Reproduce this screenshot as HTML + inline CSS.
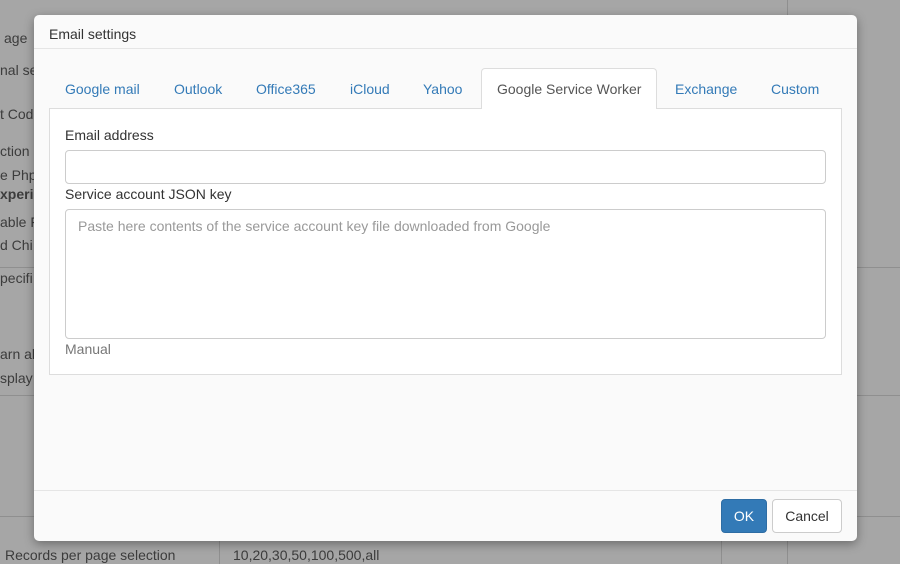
<!DOCTYPE html>
<html style="background:#a6a6a6"><head><style>
*{box-sizing:border-box;margin:0;padding:0}
html,body{background:#a6a6a6}
body{width:900px;height:564px;overflow:hidden;font-family:"Liberation Sans",sans-serif;font-size:14px;color:#333;position:relative}
.back{position:absolute;left:0;top:0;width:900px;height:564px;background:#a6a6a6}
.bg{position:absolute;color:#3c3c3c;font-size:14px;white-space:nowrap}
.hl{position:absolute;left:0;width:900px;height:1px;background:#8f8f8f}
.vl{position:absolute;width:1px;background:#8f8f8f}
.dlg{position:absolute;left:34px;top:15px;width:823px;height:526px;background:#fafafa;border-radius:5px;box-shadow:0 3px 10px rgba(0,0,0,.35);overflow:hidden}
.hdr{height:34px;border-bottom:1px solid #e5e5e5;padding:11px 15px 0;font-size:14px;color:#333}
.tabs{position:absolute;top:53px;left:15px;right:15px;height:41px;border-bottom:1px solid #ddd}
.tab{position:absolute;top:0;height:41px;line-height:42px;color:#337ab7;font-size:14px;white-space:nowrap}
.tab.act{background:#fff;border:1px solid #ddd;border-bottom-color:#fff;border-radius:4px 4px 0 0;color:#555;padding:0 15px;height:42px;line-height:40px}
.panel{position:absolute;left:15px;top:94px;width:793px;height:266px;background:#fff;border:1px solid #ddd;border-top:none}
.lbl{position:absolute;left:15px;font-size:14px;color:#333}
.inp{position:absolute;left:15px;width:761px;border:1px solid #ccc;border-radius:4px;background:#fff}
.ftr{position:absolute;left:0;right:0;top:475px;border-top:1px solid #e5e5e5}
.btn{position:absolute;top:484px;height:34px;border-radius:4px;font-size:14px;text-align:center;line-height:32px}
</style></head><body>
<div class="back"></div>
<div class="bg" style="left:4px;top:30px">age</div>
<div class="bg" style="left:0;top:62px">nal se</div>
<div class="bg" style="left:0;top:106px">t Cod</div>
<div class="bg" style="left:0;top:143px">ction</div>
<div class="bg" style="left:0;top:167px">e Php</div>
<div class="bg" style="left:0;top:186px;font-weight:bold">xperim</div>
<div class="bg" style="left:0;top:214px">able F</div>
<div class="bg" style="left:0;top:237px">d Chi</div>
<div class="hl" style="top:267px"></div>
<div class="bg" style="left:0;top:270px">pecifi</div>
<div class="bg" style="left:0;top:346px">arn ab</div>
<div class="bg" style="left:0;top:370px">splay</div>
<div class="hl" style="top:395px"></div>
<div class="hl" style="top:516px"></div>
<div class="vl" style="left:787px;top:0;height:564px"></div>
<div class="vl" style="left:721px;top:516px;height:48px"></div>
<div class="vl" style="left:219px;top:516px;height:48px"></div>
<div class="bg" style="left:5px;top:547px">Records per page selection</div>
<div class="bg" style="left:233px;top:547px">10,20,30,50,100,500,all</div>
<div class="dlg">
<div class="hdr">Email settings</div>
<div class="tabs">
<div class="tab" style="left:16px">Google mail</div>
<div class="tab" style="left:125px">Outlook</div>
<div class="tab" style="left:207px">Office365</div>
<div class="tab" style="left:301px">iCloud</div>
<div class="tab" style="left:374px">Yahoo</div>
<div class="tab act" style="left:432px;width:176px">Google Service Worker</div>
<div class="tab" style="left:626px">Exchange</div>
<div class="tab" style="left:722px">Custom</div>
</div>
<div class="panel">
<div class="lbl" style="top:18px">Email address</div>
<div class="inp" style="top:41px;height:34px"></div>
<div class="lbl" style="top:77px">Service account JSON key</div>
<div class="inp" style="top:100px;height:130px;padding:8px 12px;color:#999">Paste here contents of the service account key file downloaded from Google</div>
<div class="lbl" style="top:232px;color:#777">Manual</div>
</div>
<div class="ftr"></div>
<div class="btn" style="left:687px;width:46px;background:#337ab7;color:#fff;border:1px solid #2e6da4">OK</div>
<div class="btn" style="left:738px;width:70px;background:#fff;color:#333;border:1px solid #ccc">Cancel</div>
</div>
</body></html>
